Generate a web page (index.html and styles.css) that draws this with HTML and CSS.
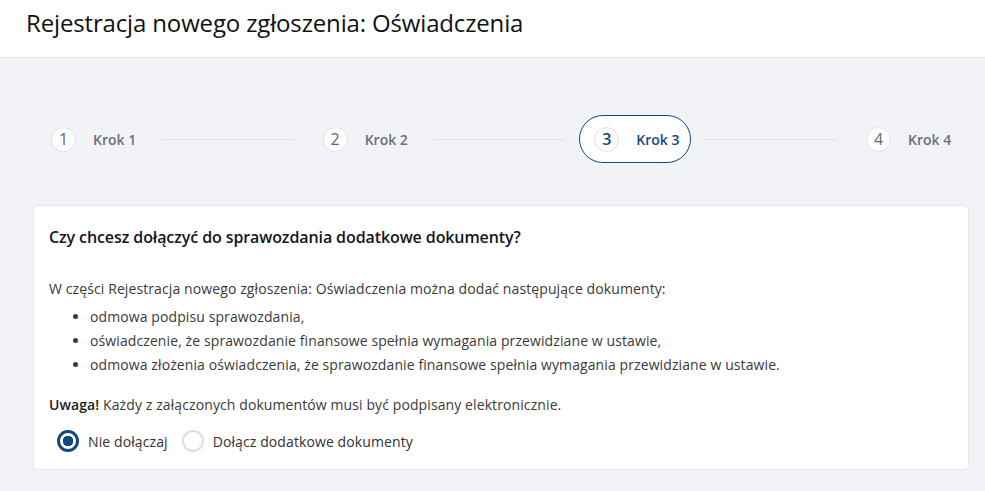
FILE: index.html
```html
<!DOCTYPE html>
<html lang="pl">
<head>
    <meta charset="UTF-8">
    <title>Rejestracja nowego zgłoszenia: Oświadczenia</title>
    <link rel="stylesheet" href="styles.css">
</head>
<body>
    <header class="page-header">
        <h1>Rejestracja nowego zgłoszenia: Oświadczenia</h1>
    </header>

    <main class="content">
        <ol class="stepper">
            <li class="step"><span class="step-num">1</span><span class="step-label">Krok 1</span></li>
            <li class="step-line"></li>
            <li class="step"><span class="step-num">2</span><span class="step-label">Krok 2</span></li>
            <li class="step-line"></li>
            <li class="step active"><span class="step-num">3</span><span class="step-label">Krok 3</span></li>
            <li class="step-line"></li>
            <li class="step"><span class="step-num">4</span><span class="step-label">Krok 4</span></li>
        </ol>

        <section class="card">
            <h2>Czy chcesz dołączyć do sprawozdania dodatkowe dokumenty?</h2>
            <p>W części Rejestracja nowego zgłoszenia: Oświadczenia można dodać następujące dokumenty:</p>
            <ul class="doc-list">
                <li>odmowa podpisu sprawozdania,</li>
                <li>oświadczenie, że sprawozdanie finansowe spełnia wymagania przewidziane w ustawie,</li>
                <li>odmowa złożenia oświadczenia, że sprawozdanie finansowe spełnia wymagania przewidziane w ustawie.</li>
            </ul>
            <p class="note"><strong>Uwaga!</strong> Każdy z załączonych dokumentów musi być podpisany elektronicznie.</p>
            <div class="radios">
                <label class="radio checked"><span class="radio-dot"></span>Nie dołączaj</label>
                <label class="radio"><span class="radio-dot"></span>Dołącz dodatkowe dokumenty</label>
            </div>
        </section>
    </main>
</body>
</html>
```

FILE: styles.css
```css
body, html {
    margin: 0;
    height: 100%;
    font-family: 'Open Sans', sans-serif;
    background: #f2f3f6;
    color: #222;
    overflow: hidden;
}
.page-header {
    background: #fff;
    height: 58px;
    border-bottom: 1px solid #e6e8ec;
    padding: 0 26px 13px;
    box-sizing: border-box;
    display: flex;
    align-items: center;
}
h1 {
    margin: 0;
    font-size: 24px;
    font-weight: 500;
    color: #111;
    letter-spacing: -0.15px;
}
.content {
    padding: 57px 16px 0 33px;
}

/* stepper */
.stepper {
    list-style: none;
    margin: 0 6px 0 3px;
    padding: 0;
    display: flex;
    align-items: center;
}
.step {
    width: 112px;
    height: 48px;
    box-sizing: border-box;
    border: 1px solid transparent;
    border-radius: 24px;
    display: flex;
    align-items: center;
    padding-left: 14px;
    color: #6b6f76;
    font-size: 14px;
    font-weight: 600;
}
.step-num {
    width: 25px;
    height: 25px;
    box-sizing: border-box;
    border-radius: 50%;
    border: 1px solid #dfe1e6;
    background: #fff;
    display: flex;
    align-items: center;
    justify-content: center;
    font-size: 16px;
    font-weight: 400;
    color: #666;
    margin-right: 17px;
}
.step.active {
    background: #fff;
    border-color: #12477f;
    color: #12477f;
}
.step.active .step-num {
    color: #12477f;
    font-weight: 600;
}
.step-line {
    flex: 1;
    height: 1px;
    background: #dcdfe4;
    margin: 0 14px;
}

/* card */
.card {
    margin-top: 42px;
    background: #fff;
    border: 1px solid #e4e6ea;
    border-radius: 5px;
    padding: 20px 15px 17px;
    font-size: 14px;
    letter-spacing: 0.1px;
    color: #3a3a3a;
}
h2 {
    margin: 0 0 29px;
    font-size: 16px;
    font-weight: 600;
    letter-spacing: -0.1px;
    color: #14161c;
}
.card p {
    margin: 0;
    line-height: 24px;
}
.doc-list {
    margin: 4px 0 16px;
    padding-left: 41px;
}
.doc-list li {
    line-height: 24px;
}
.note strong {
    font-weight: 600;
    color: #222;
}
.radios {
    display: flex;
    gap: 14px;
    margin-top: 13px;
    padding-left: 8px;
}
.radio {
    display: flex;
    align-items: center;
    gap: 9px;
    color: #333;
}
.radio-dot {
    width: 22px;
    height: 22px;
    box-sizing: border-box;
    border-radius: 50%;
    border: 2px solid #dcdee3;
    background: #fff;
}
.radio.checked .radio-dot {
    border-color: #12477f;
    border-width: 3px;
    background: radial-gradient(circle, #12477f 0 5px, #fff 5.5px);
}
```
